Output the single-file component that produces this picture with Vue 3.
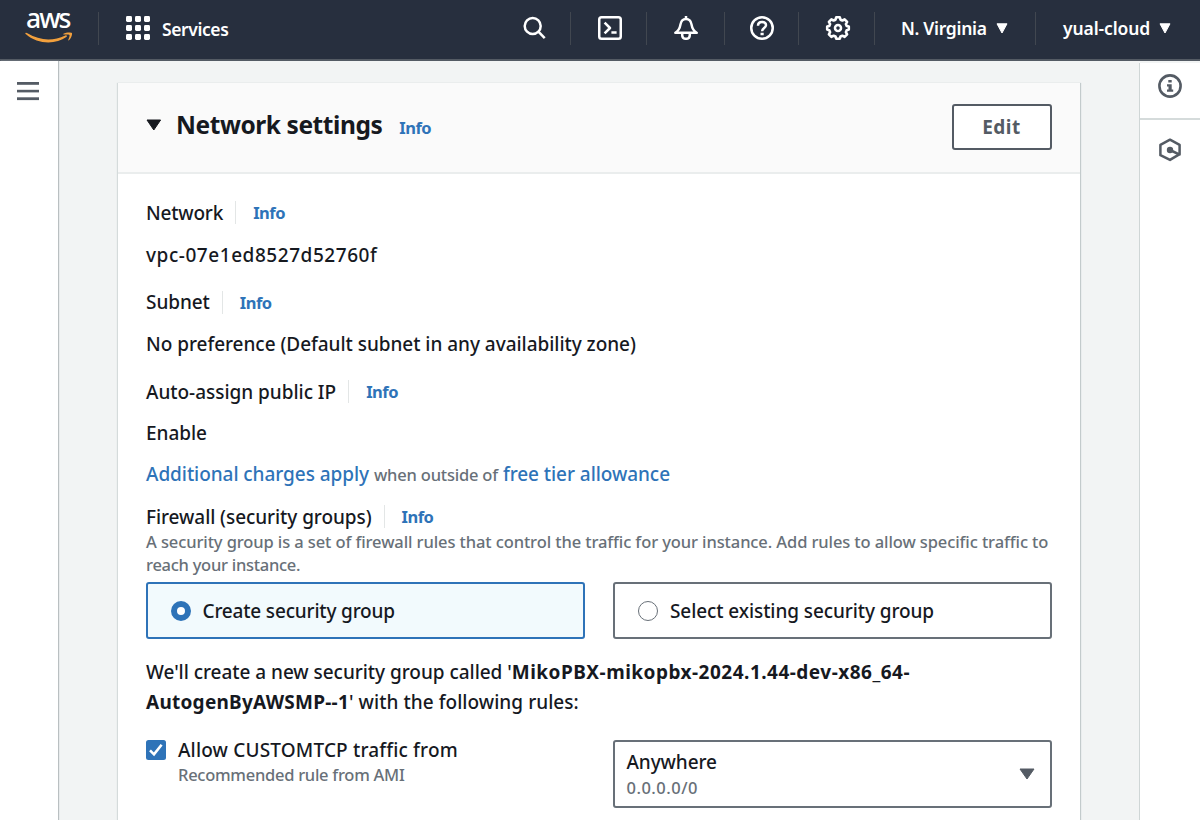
<script setup>
const fields = [
  { label: 'Network', value: 'vpc-07e1ed8527d52760f', key: 'network' },
  { label: 'Subnet', value: 'No preference (Default subnet in any availability zone)', key: 'subnet' },
  { label: 'Auto-assign public IP', value: 'Enable', key: 'ip' },
]
</script>

<template>
  <div class="page">
    <header class="topbar">
      <div class="logo">
        <span class="logo-text">aws</span>
        <svg class="smile" width="48" height="12" viewBox="0 0 48 12">
          <path d="M.4 1.200C1 .5 1.700.9 2.400 1.300 15 8.800 28 9.200 40.300 3.500c1.400-.6 2.300.6 1.100 1.500C31 12.400 13 12.800 1 2.200.5 1.800.2 1.500.4 1.200Z" fill="#f2a03d" />
          <path d="M38.400 1.800c2.500-1.600 7.800-1.700 8.500-.8.700 1-.6 5.400-3 7.300-.5.300-.9.100-.7-.4.700-1.600 1.700-4.300 1.300-5-.5-.6-3.700-.5-5.500-.3-.7.100-.9-.4-.6-.8Z" fill="#f2a03d" />
        </svg>
      </div>
      <i class="sep"></i>
      <div class="services">
        <svg width="24" height="24" viewBox="0 0 24 24" fill="#fff">
          <template v-for="r in 3" :key="r">
            <rect v-for="c in 3" :key="c" :x="(c - 1) * 9" :y="(r - 1) * 9" width="6" height="6" rx="1.400" />
          </template>
        </svg>
        <span class="nav-text services-text">Services</span>
      </div>
      <div class="tool search">
        <svg width="24" height="24" viewBox="0 0 24 24" fill="none" stroke="#fff" stroke-width="2.500">
          <circle cx="9.700" cy="10" r="8" />
          <path d="M15.400 15.700 21.700 22.200" />
        </svg>
      </div>
      <i class="sep"></i>
      <div class="tool w75 shift">
        <svg width="24" height="24" viewBox="0 0 24 24" fill="none" stroke="#fff" stroke-width="2.500">
          <rect x="1.250" y="1.250" width="21.500" height="21.500" rx="2.300" />
          <path d="M6.600 6.600 12 12 6.600 17.400M13.400 16.600h5.200" stroke-linejoin="round" />
        </svg>
      </div>
      <i class="sep"></i>
      <div class="tool w77">
        <svg width="24" height="24" viewBox="0 0 24 24" fill="none" stroke="#fff" stroke-width="2.500" stroke-linejoin="round">
          <path d="M12 0v3M1.300 16.800c3.800-2.200 4.600-4.800 5.200-8.400C7 5 9 2.900 12 2.900s5 2.100 5.500 5.500c.6 3.600 1.400 6.200 5.200 8.400Z" />
          <path d="M8.200 17v2c0 2.300 1.600 3.800 3.800 3.800s3.800-1.500 3.800-3.800v-2" />
        </svg>
      </div>
      <i class="sep"></i>
      <div class="tool w73">
        <svg width="24" height="24" viewBox="0 0 24 24" fill="none" stroke="#fff" stroke-width="2.500">
          <circle cx="12" cy="12" r="10.750" />
          <path d="M8 9.700C8 7.200 9.700 5.900 12 5.900s4 1.400 4 3.400c0 2.600-3.900 2.900-3.900 5.900" />
          <path d="M10.500 18h3.200" />
        </svg>
      </div>
      <i class="sep"></i>
      <div class="tool w75 shift">
        <svg width="26" height="26" viewBox="-13 -13 26 26" fill="none" stroke="#fff" stroke-width="2.600" stroke-linejoin="round">
          <path d="M-1.800-10.700h3.600l.7 2.400 1.900.8 2.200-1.200 2.500 2.500-1.200 2.200.8 1.900 2.100.5v3.200l-2.100.7-.8 1.900 1.200 2.200-2.500 2.500-2.200-1.200-1.900.8-.7 2.200h-3.600l-.7-2.200-1.900-.8-2.200 1.200-2.500-2.500 1.200-2.200-.8-1.900-2.100-.7v-3.200l2.100-.5.8-1.900-1.200-2.200 2.500-2.500 2.200 1.200 1.900-.8Z" />
          <circle r="3" />
        </svg>
      </div>
      <i class="sep"></i>
      <div class="menu region">
        <span class="nav-text region-text">N. Virginia</span>
        <svg width="12" height="11" viewBox="0 0 12 11"><path d="M1 .8h10L6 10Z" fill="#fff" stroke="#fff" stroke-linejoin="round" /></svg>
      </div>
      <i class="sep"></i>
      <div class="menu account">
        <span class="nav-text account-text">yual-cloud</span>
        <svg width="12" height="11" viewBox="0 0 12 11"><path d="M1 .8h10L6 10Z" fill="#fff" stroke="#fff" stroke-linejoin="round" /></svg>
      </div>
    </header>

    <div class="body">
      <nav class="left">
        <svg width="22" height="19" viewBox="0 0 22 19" fill="#545b64">
          <rect width="22" height="2.800" /><rect y="7.800" width="22" height="2.600" /><rect y="15.300" width="22" height="2.800" />
        </svg>
      </nav>

      <main class="content">
        <section class="card">
          <div class="card-head">
            <svg width="16" height="12" viewBox="0 0 16 12"><path d="M1 1h13.600L7.800 11Z" fill="#16191f" stroke="#16191f" stroke-linejoin="round" /></svg>
            <h2>Network settings</h2>
            <a class="info head-info">Info</a>
            <button class="edit">Edit</button>
          </div>

          <div class="card-body">
            <div v-for="f in fields" :key="f.key" class="field" :class="f.key">
              <div class="label-row">
                <span class="label">{{ f.label }}</span>
                <a class="info divided">Info</a>
              </div>
              <div class="value-row"><span class="value">{{ f.value }}</span></div>
            </div>

            <div class="charges">
              <a class="link-a">Additional charges apply</a>
              <span class="muted">when outside of</span>
              <a class="link-b">free tier allowance</a>
            </div>

            <div class="label-row firewall">
              <span class="label">Firewall (security groups)</span>
              <a class="info divided">Info</a>
            </div>
            <div class="helper">
              <span class="helper-1">A security group is a set of firewall rules that control the traffic for your instance. Add rules to allow specific traffic to</span><br>
              <span class="helper-2">reach your instance.</span>
            </div>

            <div class="tiles">
              <label class="tile selected">
                <span class="radio"></span><span class="create">Create security group</span>
              </label>
              <label class="tile">
                <span class="radio"></span><span class="existing">Select existing security group</span>
              </label>
            </div>

            <p class="note">
              <span class="n1">We'll create a new security group called '</span><b class="n2">MikoPBX-mikopbx-2024.1.44-dev-x86_64-</b><br>
              <b class="n3">AutogenByAWSMP--1</b><span class="n4">' with the following rules:</span>
            </p>

            <div class="rule">
              <div class="check-col">
                <svg class="check" width="20" height="20" viewBox="0 0 20 20">
                  <rect width="20" height="20" rx="2.500" fill="#2e73b8" />
                  <path d="M4 10.400 8 14.400 15.600 4.800" fill="none" stroke="#fff" stroke-width="2.600" />
                </svg>
                <div>
                  <div class="rule-title">Allow CUSTOMTCP traffic from</div>
                  <div class="rule-sub">Recommended rule from AMI</div>
                </div>
              </div>
              <div class="select">
                <div>
                  <div class="sel-title">Anywhere</div>
                  <div class="sel-sub">0.0.0.0/0</div>
                </div>
                <svg width="16" height="12" viewBox="0 0 16 12"><path d="M1 1h14L8 11Z" fill="#545b64" stroke="#545b64" stroke-linejoin="round" /></svg>
              </div>
            </div>
          </div>
        </section>
      </main>

      <aside class="right">
        <div class="panel-btn first">
          <svg width="24" height="24" viewBox="0 0 24 24" fill="none" stroke="#545b64" stroke-width="2.600">
            <circle cx="12" cy="12" r="10.600" />
            <path d="M10.300 6h3.400v2.500h-3.400ZM9 10.300h4.700v5.200h1.500v2.300H9v-2.300h1.500v-2.900H9Z" fill="#545b64" stroke="none" />
          </svg>
        </div>
        <div class="panel-btn second">
          <svg width="24" height="24" viewBox="0 0 24 24" fill="none" stroke="#545b64" stroke-width="2.500" stroke-linejoin="round">
            <path d="M20.800 16.600 12 21.900 2.400 17.200V6.800L12 1.700 21.600 6.800v9.800L12 12" />
            <circle cx="12" cy="12" r="3.200" fill="#545b64" stroke="none" />
          </svg>
        </div>
      </aside>
    </div>
  </div>
</template>

<style>
body { margin: 0; overflow: hidden; }
</style>

<style scoped>
* { box-sizing: border-box; }
.page {
  width: 1200px; height: 820px; overflow: hidden; display: flex; flex-direction: column;
  font-family: "Noto Sans", "Open Sans", sans-serif; font-size: 19px; font-weight: 500; color: #16191f; background: #f2f4f4;
  white-space: nowrap;
}
.topbar {
  height: 61px; flex: none; display: flex; align-items: center; background: #272f3e;
  border-bottom: 2px solid #545b64; color: #fff; padding-bottom: 3px;
}
.sep { width: 1px; height: 33px; background: #414750; flex: none; }
.logo { width: 98px; padding-left: 25px; height: 56px; flex: none; }
.logo-text { display: block; height: 32px; line-height: 37px; padding-left: 1px; font-size: 26.500px; font-weight: 500; letter-spacing: -2px; }
.smile { display: block; }
.services { display: flex; align-items: center; width: 424px; padding-left: 27px; gap: 12px; }
.nav-text { font-size: 17.500px; font-weight: 600; line-height: 24px; letter-spacing: -.3px; }
.services-text { padding-top: 2px; letter-spacing: -.4px; }
.account-text { letter-spacing: -.1px; }
.tool { display: flex; justify-content: center; align-items: center; flex: none; }
.search { width: 47px; justify-content: flex-start; }
.w75 { width: 75px; }
.w77 { width: 77px; }
.w73 { width: 73px; }
.shift { padding-left: 3px; }
.menu { display: flex; align-items: center; flex: none; }
.menu svg { margin-left: 9px; }
.region { width: 160px; padding-left: 26px; }
.account { padding-left: 27px; }

.body { flex: 1; display: flex; min-height: 0; }
.left { width: 58px; flex: none; background: #fff; padding: 20px 0 0 17px; box-shadow: 1px 0 1px #b9bfc1; }
.content { flex: 1; min-width: 0; padding: 21px 59px 0 60px; }
.card { height: 760px; background: #fff; border-top: 1px solid #eaeded; box-shadow: 1px 1px 1px #c3cbcc, -1px 1px 1px #d5dbdb; }
.card-head {
  height: 91px; background: #fafafa; border-bottom: 2px solid #eaeded;
  display: flex; align-items: center; padding: 0 28px 2px;
}
h2 { margin: 0 0 3px 14px; font-size: 24.500px; font-weight: 700; line-height: 34px; letter-spacing: -.43px; }
.card-head > svg { margin-bottom: 4px; }
.info { color: #2e73b8; font-size: 16.500px; font-weight: 700; line-height: 22px; letter-spacing: -.5px; }
.head-info { margin-left: 17px; padding-top: 3px; }
.edit {
  margin-left: auto; width: 100px; height: 46px; border: 2px solid #545b64; border-radius: 3px; padding: 0 1px 0 0;
  background: #fff; color: #545b64; font: 700 19px "Noto Sans", sans-serif; letter-spacing: .5px;
}
.card-body { padding: 18px 28px 0 28px; }
.field { margin-bottom: 6px; }
.field.ip { margin-bottom: 0; }
.label-row { height: 41.700px; display: flex; align-items: center; line-height: 26px; }
.label { letter-spacing: -.07px; }
.network .label { letter-spacing: -.2px; }
.ip .label { letter-spacing: -.03px; }
.divided { border-left: 1px solid #e3e6e6; margin-left: 12px; padding-left: 17px; padding-top: 1px; }
.value-row { height: 41.700px; line-height: 42px; letter-spacing: -.04px; }
.network .value-row { letter-spacing: .55px; }
.charges { height: 41.700px; line-height: 41.700px; display: flex; gap: 5px; align-items: baseline; color: #2e73b8; letter-spacing: -.06px; }
.muted { color: #687078; font-size: 16.500px; letter-spacing: -.2px; }
.label-row.firewall { height: 28px; margin-top: 7px; }
.helper { color: #687078; font-size: 16.500px; line-height: 23px; height: 46px; margin-top: -1px; letter-spacing: -.105px; }
.helper-2 { letter-spacing: -.27px; }
.tiles { display: grid; grid-template-columns: 1fr 1fr; gap: 28px; margin-top: 6.500px; }
.tile { height: 57px; border: 2px solid #687078; border-radius: 3px; display: flex; align-items: center; padding-left: 23px; }
.tile.selected { border-color: #2e73b8; background: #f2fafd; }
.radio { width: 20px; height: 20px; border: 1.500px solid #687078; border-radius: 50%; background: #fff; margin-right: 12px; }
.selected .radio { border: 6.500px solid #2e73b8; margin-right: 11.500px; }
.create { letter-spacing: -.18px; }
.existing { letter-spacing: -.09px; }
.note { margin: 18px 0 0; line-height: 30px; }
.n1 { letter-spacing: -.04px; }
.n2 { letter-spacing: .49px; }
.n3 { letter-spacing: .25px; }
.n4 { letter-spacing: .05px; }
.rule { display: flex; justify-content: space-between; margin-top: 22.500px; }
.check-col { display: flex; gap: 12px; }
.rule-title { line-height: 26px; margin-top: -2.500px; letter-spacing: .17px; }
.rule-sub, .sel-sub { font-size: 16.500px; line-height: 24px; color: #687078; }
.rule-sub { letter-spacing: -.27px; }
.select {
  width: 439px; height: 68px; border: 2px solid #687078; border-radius: 3px;
  display: flex; justify-content: space-between; align-items: center; padding: 2px 15px 0 11.500px;
}
.select svg { margin-bottom: 2px; }
.sel-title { line-height: 27px; letter-spacing: -.1px; }
.sel-sub { letter-spacing: .5px; }

.right { width: 61px; flex: none; background: #fff; border-left: 1.500px solid #cfd6d6; margin-top: 2px; }
.panel-btn { display: flex; justify-content: center; padding-right: 1px; }
.first { height: 57px; border-bottom: 2px solid #d5dbdb; padding-top: 11px; }
.second { padding-top: 18px; }
</style>
